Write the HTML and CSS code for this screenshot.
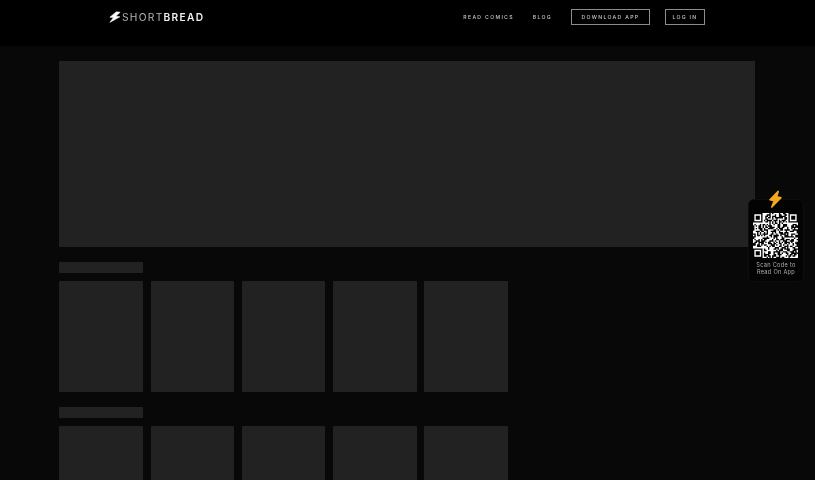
FILE: index.html
```html
<!DOCTYPE html>
<html lang="en">
<head>
<meta charset="utf-8">
<title>Shortbread</title>
<link rel="stylesheet" href="styles.css">
</head>
<body>
<header class="topbar">
  <div class="logo">
    <svg class="logo-bolt" width="12" height="12" viewBox="0 0 12 12"><path fill="#fff" stroke="#fff" stroke-width="0.5" stroke-linejoin="round" d="M7.4 0.8 0.8 6.2 4.4 6.6 0.8 11.4 11 5.8 7 5.3 11.2 1.2 Z"/></svg>
    <span class="logo-light">SHORT</span><span class="logo-bold">BREAD</span>
  </div>
  <nav class="nav">
    <a class="nav-link nav-read">READ COMICS</a>
    <a class="nav-link nav-blog">BLOG</a>
    <a class="nav-btn nav-download">DOWNLOAD APP</a>
    <a class="nav-btn nav-login">LOG IN</a>
  </nav>
</header>
<main class="content">
  <div class="hero"></div>
  <div class="shelf-title"></div>
  <div class="shelf">
    <div class="card"></div><div class="card"></div><div class="card"></div><div class="card"></div><div class="card"></div>
  </div>
  <div class="shelf-title"></div>
  <div class="shelf">
    <div class="card"></div><div class="card"></div><div class="card"></div><div class="card"></div><div class="card"></div>
  </div>
</main>
<aside class="qr-widget">
  <svg class="qr-bolt" width="18" height="19" viewBox="0 0 18 19"><path fill="#f6a821" stroke="#f6a821" stroke-width="1.6" stroke-linejoin="round" d="M12.2 1.4 4 9.8 8.2 10.8 5.8 17 15 7.8 10.6 6.8 Z"/></svg>
  <svg class="qr-code" id="qr" width="45" height="45" viewBox="0 0 33 33"></svg>
  <p class="qr-text">Scan Code to<br>Read On App</p>
</aside>
<script src="qr.js"></script>
</body>
</html>
```
FILE: styles.css
```css
* { box-sizing: border-box; }
html, body { margin: 0; height: 100%; }
body {
  background: #080808;
  font-family: "Liberation Sans", sans-serif;
  overflow: hidden;
  position: relative;
  height: 480px;
}
.topbar {
  height: 46px;
  background: #000;
  display: flex;
  align-items: center;
  justify-content: space-between;
  padding: 0 110px 12px 109px;
}
.logo {
  display: flex;
  align-items: center;
  font-family: Inter, sans-serif;
  font-size: 10.2px;
  letter-spacing: 1.3px;
  color: #b4b4b4;
  will-change: opacity;
}
.logo-bolt { margin-right: 1px; }
.logo-bold { color: #f0f0f0; font-weight: 600; }
.nav {
  display: flex;
  align-items: center;
  font-family: Inter, sans-serif;
  font-size: 5.2px;
  letter-spacing: 1.28px;
  color: #c8c8c8;
  font-weight: 500;
  will-change: opacity;
}
.nav-read { margin-right: 19px; }
.nav-blog { margin-right: 19px; }
.nav-btn {
  height: 16px;
  border: 1px solid #8c8c8c;
  display: flex;
  align-items: center;
  justify-content: center;
}
.nav-download { width: 79px; margin-right: 15px; }
.nav-login { width: 40px; }
.content {
  padding: 15px 60px 0 59.4px;
}
.hero {
  height: 186px;
  background: #222;
  margin-bottom: 15px;
}
.shelf-title {
  width: 84px;
  height: 11px;
  background: #222;
  border-radius: 1px;
  margin-bottom: 8px;
}
.shelf {
  display: grid;
  grid-template-columns: repeat(5, 83.6px);
  column-gap: 7.6px;
  margin-bottom: 15px;
}
.card {
  height: 111px;
  background: #222;
  border-radius: 1px;
}
.qr-widget {
  position: absolute;
  left: 748px;
  top: 199px;
  width: 56px;
  height: 83px;
  background: #030303;
  border: 1px solid #0e0e0e;
  border-radius: 6px;
  display: flex;
  flex-direction: column;
  align-items: center;
  padding-top: 13px;
}
.qr-bolt { position: absolute; left: 17px; top: -10px; }
.qr-code {
  display: block;
  flex: none;
  background: #fff;
  margin-right: 1px;
}
.qr-text {
  margin: 4px 0 0;
  font-family: Inter, sans-serif;
  font-size: 5.6px;
  letter-spacing: 0.3px;
  line-height: 7px;
  text-align: center;
  color: #b0b0b0;
  will-change: opacity;
}
```
FILE: qr.js
```js
var qr = document.getElementById('qr');
var n = 33, seed = 11;
function rnd() { seed = (seed * 16807) % 2147483647; return seed / 2147483647; }
function finder(r, c, ox, oy) {
  if (r < ox || r > ox + 6 || c < oy || c > oy + 6) return null;
  var a = r - ox, b = c - oy;
  return a === 0 || a === 6 || b === 0 || b === 6 || (a >= 2 && a <= 4 && b >= 2 && b <= 4);
}
var d = '';
for (var r = 0; r < n; r++) {
  for (var c = 0; c < n; c++) {
    var v = finder(r, c, 0, 0);
    if (v === null) v = finder(r, c, 0, n - 7);
    if (v === null) v = finder(r, c, n - 7, 0);
    var gap = (r <= 7 && (c <= 7 || c >= n - 8)) || (r >= n - 8 && c <= 7);
    if (v === null) v = gap ? false : rnd() > 0.5;
    if (v) d += 'M' + c + ' ' + r + 'h1v1h-1z';
  }
}
var p = document.createElementNS('http://www.w3.org/2000/svg', 'path');
p.setAttribute('d', d);
p.setAttribute('fill', '#000');
qr.appendChild(p);
```
